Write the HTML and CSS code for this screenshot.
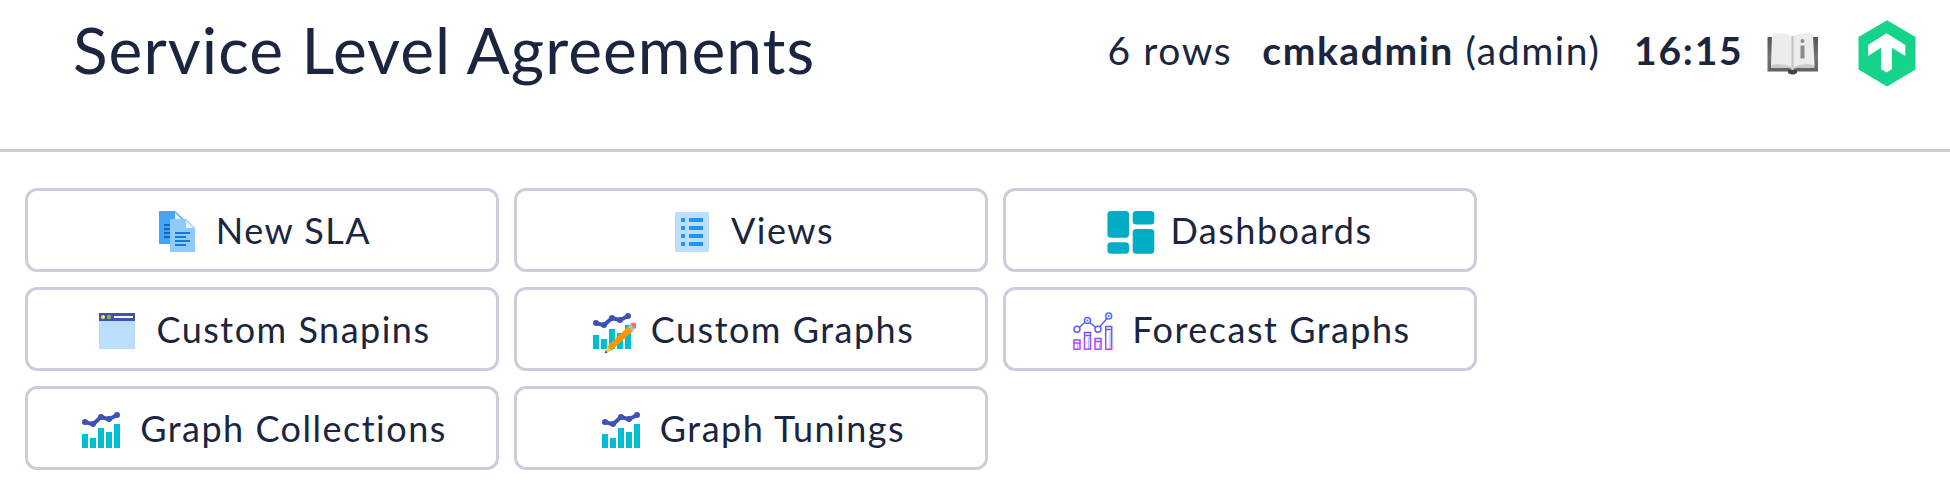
FILE: index.html
```html
<!DOCTYPE html>
<html lang="en">
<head>
<meta charset="utf-8">
<title>Service Level Agreements</title>
<link rel="stylesheet" href="styles.css">
</head>
<body>
<svg class="defs" width="0" height="0" aria-hidden="true">
  <symbol id="chart" viewBox="0 0 48 48">
    <path fill="#00bcd4" d="M5 28h6v14H5zM13 32h6v10h-6zM21 22h6v20h-6zM29 26h6v16h-6zM37 18h6v24h-6z"/>
    <g fill="#3f51b5"><circle cx="8" cy="16" r="3"/><circle cx="16" cy="18" r="3"/><circle cx="24" cy="11" r="3"/><circle cx="32" cy="13" r="3"/><circle cx="40" cy="9" r="3"/></g>
    <path fill="none" stroke="#3f51b5" stroke-width="4" d="M8 16l8 2.300L24 11l8 2.200L40 9"/>
  </symbol>
</svg>
<header class="header">
  <h1 class="title">Service Level Agreements</h1>
  <div class="info">
    <span class="rows">6 rows</span>
    <span class="user"><b>cmkadmin</b> (admin)</span>
    <b class="time">16:15</b>
    <svg class="book" viewBox="0 0 52 44">
      <defs><linearGradient id="cover" x2="0" y2="1"><stop stop-color="#555"/><stop offset=".6" stop-color="#737373"/><stop offset="1" stop-color="#606060"/></linearGradient></defs>
      <path fill="url(#cover)" d="M.5 5h50.500v34.500H.5z"/>
      <path fill="#444" d="M21 38h9v3q-4.500 3-9 0z"/>
      <path fill="#c9c9c9" d="M4 32h43.500v4H30q-3 0-4 2h-1q-1-2-4-2H4z"/>
      <path fill="#ececec" d="M5 3Q5.500 1.500 8 1.300 19 .8 25.500 4.500 32 .8 43 1.300q2.500.2 3 1.700L47.500 33Q35 30.500 25.500 35.500 16 30.500 4 33z"/>
      <path fill="#c2c2c2" d="M24.500 4h2v31h-2z"/>
      <path fill="#8b8b8b" d="M33.500 13.500h4v13h-4z"/><circle cx="35.500" cy="9" r="2" fill="#8b8b8b"/>
    </svg>
    <svg class="logo" viewBox="0 0 58 67">
      <path fill="#15d48a" d="M29 .3L57.500 17v32.500L29 66.500.5 49.500V17z"/>
      <path fill="#fff" d="M28.500 13.300L47.300 25v11L34 27.700V49l-5.500 3.500L23 49V27.700L10 36V25z"/>
    </svg>
  </div>
</header>
<nav class="buttons">
  <a class="button">
    <svg class="icon" viewBox="0 0 48 48"><path fill="#42a5f5" d="M31 36H6V3h16l9 8.500z"/><path fill="#e1f5fe" d="M29.500 12H22V4.500z"/><path fill="#1565c0" d="M11 16h10v2H11zM11 20h10v2H11zM11 24h10v2H11zM11 28h10v2H11z"/><path fill="#90caf9" d="M42 44H17V11h16l9 9z"/><path fill="#e1f5fe" d="M40.500 20H33v-7.500z"/><path fill="#1976d2" d="M22 24h15v2H22zM22 28h11v2H22zM22 32h15v2H22zM22 36h11v2H22z"/></svg>
    <span>New SLA</span>
  </a>
  <a class="button">
    <svg class="icon" viewBox="0 0 48 48"><path fill="#bbdefb" d="M7 4h34v40H7z"/><path fill="#2196f3" d="M13 10h4v4h-4zM13 18h4v4h-4zM13 26h4v4h-4zM13 34h4v4h-4zM21 10h14v4H21zM21 18h14v4H21zM21 26h14v4H21zM21 34h14v4H21z"/></svg>
    <span>Views</span>
  </a>
  <a class="button">
    <svg class="icon" viewBox="0 0 48 48" fill="#00adc5"><rect x=".4" y="3" width="21.600" height="26.700" rx="3.500"/><rect x=".4" y="34.200" width="21.600" height="11.500" rx="3.500"/><rect x="25.700" y="3" width="21.600" height="13.600" rx="3.500"/><rect x="25.700" y="21" width="21.600" height="24.700" rx="3.500"/></svg>
    <span>Dashboards</span>
  </a>
  <a class="button">
    <svg class="icon" viewBox="0 0 48 48"><path fill="#bbdefb" d="M6 6h36v36H6z"/><path fill="#3f51b5" d="M6 6h36v8H6z"/><circle cx="10" cy="10" r="2" fill="#ffeb3b"/><circle cx="16" cy="10" r="2" fill="#8bc34a"/><path fill="#fff" d="M21 9h19v2H21z"/></svg>
    <span>Custom Snapins</span>
  </a>
  <a class="button">
    <svg class="icon" viewBox="0 0 48 48"><use href="#chart"/><path fill="#ff9800" d="M40 19.500l4.800 4.700L23.500 43.500l-4.300-4z"/><path fill="#b0bec5" d="M42.500 17l4.300 4.500-2.200 2.800-4.800-4.600z"/><path fill="#e57373" d="M42.500 17q2-2.500 4.500-1t1 4.500L46.500 22z"/><path fill="#ffc84a" d="M19.200 39.500l4.300 4-4.500 2.300-1.500-1.500z"/><path fill="#37474f" d="M17.600 43.500l1.900 1.900-2.800 1.200z"/></svg>
    <span>Custom Graphs</span>
  </a>
  <a class="button">
    <svg class="icon" viewBox="0 0 48 48" fill="none">
      <defs><linearGradient id="fc" gradientUnits="userSpaceOnUse" x1="0" y1="5" x2="0" y2="43"><stop stop-color="#3778ff"/><stop offset=".5" stop-color="#6a55f5"/><stop offset="1" stop-color="#d23bf7"/></linearGradient></defs>
      <path stroke="#8fd0fb" stroke-width="1.300" d="M8.700 37v5M19.500 30v12M30.500 37v5M41 25v17"/>
      <g stroke="url(#fc)" stroke-width="1.500"><circle cx="8" cy="22.300" r="3"/><circle cx="18.500" cy="13.500" r="3"/><circle cx="29" cy="22.300" r="3"/><circle cx="39.700" cy="9" r="3"/><path d="M10.300 20.300l5.800-5M20.700 15.500l6.100 4.800M30.700 19.700l7.200-8.200M5 33h6v9.300H5zM5 36h6M15.500 25.500h6v16.800h-6zM15.500 28.500h6M26 31.500h6v10.800h-6zM26 34.500h6M36.700 19.500h6v22.800h-6zM36.700 22.500h6"/></g>
      <circle cx="18.500" cy="13.500" r="1" fill="#4d67fa"/><circle cx="39.700" cy="9" r="1" fill="#4d67fa"/>
    </svg>
    <span>Forecast Graphs</span>
  </a>
  <a class="button"><svg class="icon" viewBox="0 0 48 48"><use href="#chart"/></svg><span>Graph Collections</span></a>
  <a class="button"><svg class="icon" viewBox="0 0 48 48"><use href="#chart"/></svg><span>Graph Tunings</span></a>
</nav>
</body>
</html>
```
FILE: styles.css
```css
body {
  margin: 0;
  background: #fff;
  color: #1a2540;
  font-family: Lato, sans-serif;
}
.defs { display: none; }
.header {
  box-sizing: border-box;
  height: 152px;
  border-bottom: 3px solid #cccddc;
  padding: 0 34px 0 73px;
  display: flex;
  justify-content: space-between;
  align-items: flex-start;
}
.title {
  margin: 12px 0 0;
  font-size: 64px;
  line-height: 76px;
  font-weight: 400;
  letter-spacing: 1.03px;
  white-space: nowrap;
}
.info {
  display: flex;
  align-items: flex-start;
  font-size: 39px;
  line-height: 46px;
  letter-spacing: 1.6px;
  white-space: nowrap;
  padding-top: 20px;
}
.info > span, .time { margin-top: 7px; }
.rows { margin-right: 30px; }
.user { margin-right: 33.5px; }
.time { margin-right: 23.5px; letter-spacing: 1.8px; }
.book { width: 52px; height: 44px; margin: 12px 39px 0 0; }
.logo { width: 58px; height: 67px; }
.buttons {
  display: grid;
  grid-template-columns: repeat(3, 474px);
  grid-auto-rows: 84px;
  gap: 15px;
  padding: 36px 0 0 25px;
}
.button {
  box-sizing: border-box;
  border: 3px solid #cccddc;
  border-radius: 12px;
  display: flex;
  align-items: center;
  justify-content: center;
  gap: 15px;
  font-size: 36px;
  line-height: 44px;
  letter-spacing: 1.5px;
  white-space: nowrap;
}
.icon { width: 48px; height: 48px; margin-top: 4px; flex: none; }
```
